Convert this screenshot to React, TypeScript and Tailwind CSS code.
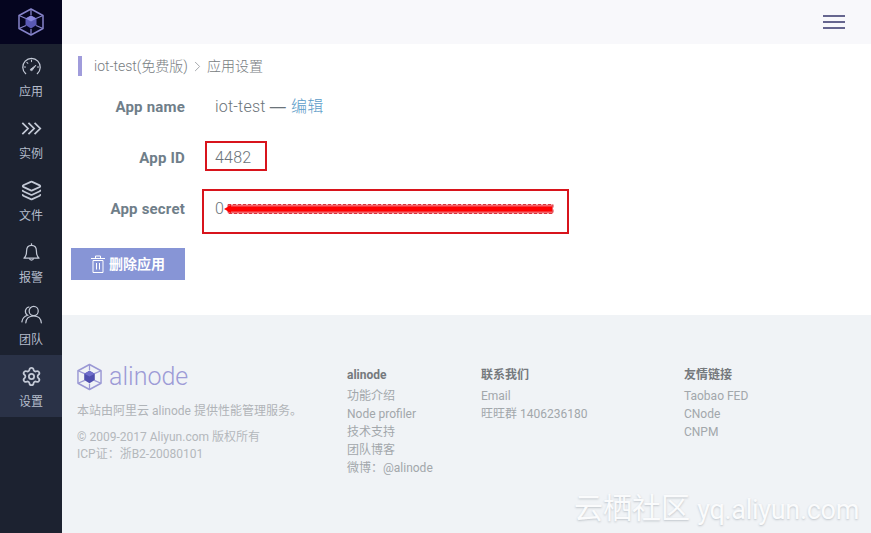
import { Layers, Settings, ChevronRight } from 'lucide-react'
import type { ComponentType } from 'react'

type IconProps = { className?: string }

const GaugeIcon = ({ className }: IconProps) => (
  <svg className={className} viewBox="0 0 24 24" fill="none" stroke="currentColor" strokeWidth="1.4" strokeLinecap="round">
    <path d="M5.4 20.2A10 10 0 1 1 18.6 20.2" />
    <path d="M12 4.6V6.4M5.2 12.5H3.8M20.2 12.5h-1.4M6.7 7.2l1.1 1.1" strokeWidth="1.2" />
    <path d="M10.6 15.4 17 10.6 12.6 16.6z" fill="currentColor" strokeWidth="1" strokeLinejoin="round" />
  </svg>
)

const ChevronsIcon = ({ className }: IconProps) => (
  <svg className={className} viewBox="0 0 24 24" fill="none" stroke="currentColor" strokeWidth="2">
    <path d="M1.500 5.500 8 12l-6.500 6.500M8.500 5.500 15 12l-6.500 6.500M15.500 5.500 22 12l-6.500 6.500" />
  </svg>
)

const BellIcon = ({ className }: IconProps) => (
  <svg className={className} viewBox="0 0 24 24" fill="none" stroke="currentColor" strokeWidth="1.4" strokeLinejoin="round">
    <path d="M12 1.500v2.300" />
    <path d="M12 3.800c-3.600 0-5.600 2.700-5.600 6.200 0 4.600-.8 6.600-3 8.500h17.200c-2.200-1.900-3-3.900-3-8.500 0-3.500-2-6.200-5.600-6.200z" />
    <path d="M9.500 18.700a2.600 2.600 0 0 0 5 0" />
  </svg>
)

const TeamIcon = ({ className }: IconProps) => (
  <svg className={className} viewBox="0 0 24 24" fill="none" stroke="currentColor" strokeWidth="1.4" strokeLinecap="round">
    <circle cx="14.500" cy="8" r="5.200" />
    <path d="M5.500 21.500c.4-4.800 4-7.800 9-7.800s8.300 3 8.700 7.800" />
    <path d="M9 3.400a5.200 5.200 0 0 0-1.500 9.500C4 14 1.400 16.800 1 20.500" />
  </svg>
)

const navItems: { label: string; icon: ComponentType<IconProps>; active?: boolean }[] = [
  { label: '应用', icon: GaugeIcon },
  { label: '实例', icon: ChevronsIcon },
  { label: '文件', icon: Layers },
  { label: '报警', icon: BellIcon },
  { label: '团队', icon: TeamIcon },
  { label: '设置', icon: Settings, active: true },
]

const footerCols = [
  { title: '联系我们', links: ['Email', '旺旺群 1406236180'], width: 'w-[203px]' },
  { title: '友情链接', links: ['Taobao FED', 'CNode', 'CNPM'], width: 'w-[150px]' },
]

const HexLogo = ({ className, stroke, cube, top }: { className: string; stroke: string; cube: string; top: string }) => (
  <svg className={className} viewBox="0 0 26 28" fill="none">
    <path d="M13 1 25 7.500v13L13 27 1 20.500v-13z" stroke={stroke} strokeWidth="1.500" strokeLinejoin="round" />
    <path d="M1 7.500 8 10.500M25 7.500 18 10.500M1 20.500 8 17.500M25 20.500 18 17.500M13 1V7M13 27V21" stroke={stroke} strokeWidth="1.300" />
    <path d="M13 7.500 18.500 10.500v6.500L13 20.500 7.500 17v-6.500z" fill={cube} />
    <path d="M13 7.500 18.500 10.500 13 13.500 7.500 10.500z" fill={top} />
  </svg>
)

const TrashIcon = ({ className }: IconProps) => (
  <svg className={className} viewBox="0 0 14 18" fill="none" stroke="currentColor" strokeWidth="1">
    <path d="M0 3.500h14M4.500 3.500V1h5v2.500" />
    <path d="M2 5.500h10v12H2z" />
    <path d="M5.500 8v6.500M8.500 8v6.500" />
  </svg>
)

export default function App() {
  return (
    <div className="relative flex h-[533px] w-[871px] overflow-hidden bg-white font-['Roboto','Noto_Sans_CJK_SC',sans-serif]">
      {/* sidebar */}
      <aside className="flex w-[62px] shrink-0 flex-col bg-[#1c2230]">
        <div className="mb-px flex h-11 items-center justify-center bg-[#05051f]">
          <HexLogo className="h-[28px] w-[26px]" stroke="#8583c9" cube="#5a59b5" top="#8a88dd" />
        </div>
        {navItems.map((item) => (
          <div
            key={item.label}
            className={`flex h-[62px] flex-col items-center pt-[11px] ${item.active ? 'bg-[#2a3247]' : ''}`}
          >
            <item.icon className="h-[21px] w-[21px] text-[#c3c9d6]" />
            <span className="mt-[7px] text-[12px] leading-[16px] text-[#b4bccb]">{item.label}</span>
          </div>
        ))}
      </aside>

      <div className="flex min-w-0 flex-1 flex-col">
        {/* top bar */}
        <header className="flex h-11 shrink-0 items-center justify-end bg-[#f8f8fb] pr-[26px]">
          <div className="flex w-[22px] flex-col gap-[4px]">
            <span className="h-[2px] bg-[#66668f]" />
            <span className="h-[2px] bg-[#66668f]" />
            <span className="h-[2px] bg-[#66668f]" />
          </div>
        </header>

        {/* content */}
        <main className="h-[271px] shrink-0 pl-[9px] pt-[12px]">
          <div className="ml-[7px] flex h-5 items-center border-l-[4px] border-[#a09cdb] pl-3 text-[14px] font-light text-[#777c81]">
            <span>iot-test(免费版)</span>
            <ChevronRight className="mx-[1px] h-[17px] w-[17px] text-[#a5a8ac]" strokeWidth={1.4} />
            <span>应用设置</span>
          </div>

          <div className="mt-[21px] flex flex-col">
            <div className="flex h-[51px] items-start">
              <div className="w-[114px] text-right text-[15px] font-bold leading-[20px] tracking-[0.2px] text-[#6f7e89]">App name</div>
              <div className="ml-[30px] text-[16px] font-light leading-[20px] tracking-[0.2px] text-[#6b7379]">
                iot-test <span className="font-['Liberation_Sans']">—</span> <span className="ml-px text-[#5b9bc8]">编辑</span>
              </div>
            </div>
            <div className="flex h-[51px] items-start">
              <div className="w-[114px] text-right text-[15px] font-bold leading-[20px] tracking-[0.2px] text-[#6f7e89]">App ID</div>
              <div className="ml-[30px] text-[16px] font-light leading-[20px] tracking-[0.2px] text-[#6b7379]">4482</div>
            </div>
            <div className="flex h-[49px] items-start">
              <div className="w-[114px] text-right text-[15px] font-bold leading-[20px] tracking-[0.2px] text-[#6f7e89]">App secret</div>
              <div className="ml-[30px] text-[16px] font-light leading-[20px] text-[#6b7379]">0</div>
            </div>
            <button className="flex h-8 w-[114px] items-center justify-center bg-[#8795d6] text-[14px] font-bold text-white">
              <TrashIcon className="mr-[4px] h-[18px] w-[14px]" />
              删除应用
            </button>
          </div>
        </main>

        {/* footer */}
        <footer className="flex flex-1 bg-[#f0f3f6] pl-[15px] pt-[50px]">
          <div className="w-[270px]">
            <div className="flex h-6 items-center">
              <HexLogo className="h-[28px] w-[25px]" stroke="#9a98d4" cube="#4f4fae" top="#6f6ecb" />
              <span className="ml-[7px] text-[25px] font-light leading-6 text-[#9d9bd6]">alinode</span>
            </div>
            <p className="mt-[13px] text-[12px] leading-[18px] text-[#b0b4b8]">本站由阿里云 alinode 提供性能管理服务。</p>
            <p className="mt-[9px] text-[12px] leading-[17px] text-[#b4b8bc]">© 2009-2017 Aliyun.com 版权所有</p>
            <p className="text-[12px] leading-[17px] text-[#b4b8bc]">ICP证：浙B2-20080101</p>
          </div>
          <div className="w-[134px] pt-px">
            <h4 className="mb-[3px] text-[12px] font-bold leading-[18px] text-[#75797d]">alinode</h4>
            {['功能介绍', 'Node profiler', '技术支持', '团队博客', '微博：@alinode'].map((link) => (
              <div key={link} className="text-[12px] leading-[18px] text-[#a2a7ab]">{link}</div>
            ))}
          </div>
          {footerCols.map((col) => (
            <div key={col.title} className={`${col.width} pt-px`}>
              <h4 className="mb-[3px] text-[12px] font-bold leading-[18px] text-[#75797d]">{col.title}</h4>
              {col.links.map((link) => (
                <div key={link} className="text-[12px] leading-[18px] text-[#a2a7ab]">{link}</div>
              ))}
            </div>
          ))}
        </footer>
      </div>

      {/* red annotations on top of the screenshot */}
      <div className="absolute left-[205px] top-[141px] h-[30px] w-[62px] border-2 border-[#d8141c]" />
      <div className="absolute left-[202px] top-[189px] h-[45px] w-[367px] border-2 border-[#d8141c]" />
      <svg className="absolute left-[224px] top-[202px]" width="330" height="14" viewBox="0 0 330 14" fill="none">
        <rect x="4" y="2.500" width="325" height="9" fill="#f2666c" stroke="#d9343c" strokeWidth="1" strokeDasharray="3 2" />
        <path d="M0 7 7 3V11z" fill="#f00" />
        <path d="M4 7H328" stroke="#f00" strokeWidth="5" />
      </svg>

      {/* watermark */}
      <div className="absolute left-[574px] top-[491px] whitespace-nowrap text-[29px] leading-[36px] text-white opacity-70 [text-shadow:0_1px_2px_#aeb4bb]">
        云栖社区 <span className="text-[27px] tracking-[-0.3px]">yq.aliyun.com</span>
      </div>
    </div>
  )
}
